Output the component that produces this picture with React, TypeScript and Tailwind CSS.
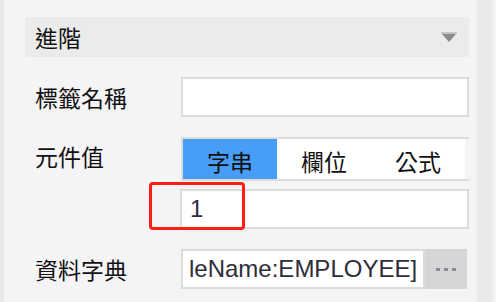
const cjk = "font-['Noto_Sans_CJK_TC','Noto_Sans_CJK_SC',sans-serif]";
const latin = "font-['Liberation_Sans',Arial,sans-serif]";

function Label({ text }: { text: string }) {
  return (
    <div className={`w-[156px] shrink-0 pl-[10px] text-[23px] leading-none text-[#111] ${cjk}`}>
      {text}
    </div>
  );
}

export default function App() {
  return (
    <div className="flex h-[302px] w-[496px] overflow-hidden bg-[#f4f4f6]">
      <div className="w-[4px] shrink-0 bg-[#e8e8ea]" />
      <div className="w-[473px] shrink-0 pl-[21px] pr-[8px] pt-[17px]">
        {/* section header */}
        <div className="flex h-[40px] items-center justify-between bg-[#ebebeb] pl-[10px] pr-[12px]">
          <span className={`text-[23px] leading-none text-[#111] ${cjk}`}>進階</span>
          <svg width="16" height="11" viewBox="0 0 16 11">
            <rect x="0" y="0" width="16" height="2" fill="#c4c4c4" />
            <polygon points="1,2 15,2 8,10" fill="#8a8a8a" />
          </svg>
        </div>

        {/* 標籤名稱 */}
        <div className="mt-[20px] flex h-[40px] items-center">
          <Label text="標籤名稱" />
          <div className="h-[40px] flex-1 border-2 border-[#dcdcdc] bg-white" />
        </div>

        {/* 元件值 */}
        <div className="mt-[20px] flex h-[44px]">
          <div className="flex items-center pb-[6px]">
            <Label text="元件值" />
          </div>
          <div className={`flex h-[44px] w-[288px] border-y-2 border-l-2 border-[#dcdcdc] text-[23px] leading-none text-[#111] ${cjk}`}>
            <div className="flex w-[94px] items-center justify-center bg-[#489df6] pt-[4px]">字串</div>
            <div className="flex w-[94px] items-center justify-center bg-white pt-[4px]">欄位</div>
            <div className="flex w-[94px] items-center justify-center bg-white pt-[4px]">公式</div>
          </div>
        </div>

        <div className="relative ml-[155px] mt-[8px] flex h-[40px] items-center border-2 border-[#dcdcdc] bg-white pl-[8px]">
          <span className={`text-[24px] leading-none text-[#2b2b48] ${latin}`}>1</span>
          <div className="absolute left-[-33px] top-[-9px] h-[48px] w-[96px] rounded-[4px] border-[3px] border-[#ff1e12]" />
        </div>

        {/* 資料字典 */}
        <div className="mt-[20px] flex h-[40px] items-center">
          <Label text="資料字典" />
          <div className="flex h-[40px] w-[286px]">
            <div className="flex w-[244px] items-center overflow-hidden border-2 border-[#dcdcdc] bg-white pl-[6px]">
              <span className={`whitespace-nowrap text-[24px] leading-none text-[#2e2e3a] ${latin}`}>leName:EMPLOYEE]</span>
            </div>
            <div className="flex w-[42px] items-center justify-center gap-[4px] bg-[#d6d6d9]">
              <span className="h-[3px] w-[4px] bg-[#8a8a8e]" />
              <span className="h-[3px] w-[4px] bg-[#8a8a8e]" />
              <span className="h-[3px] w-[4px] bg-[#8a8a8e]" />
            </div>
          </div>
        </div>
      </div>
      <div className="w-[16px] shrink-0 bg-[#e9e9eb]" />
      <div className="flex-1" />
    </div>
  );
}
